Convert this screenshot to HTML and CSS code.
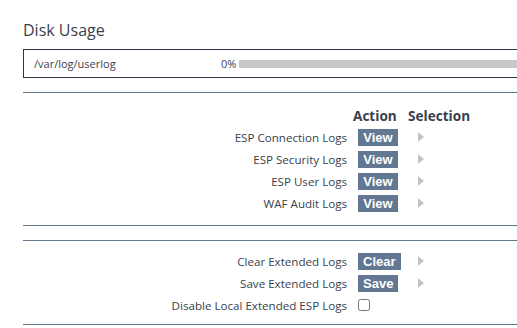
FILE: index.html
```html
<!DOCTYPE html>
<html lang="en">
<head>
    <meta charset="UTF-8">
    <title>Disk Usage</title>
    <link rel="stylesheet" href="styles.css">
</head>
<body>
    <div class="page">
        <h2 class="page-title">Disk Usage</h2>
        <div class="disk-box">
            <span class="disk-path">/var/log/userlog</span>
            <span class="disk-pct">0%</span>
            <div class="disk-bar"><div class="disk-fill" style="width: 0%"></div></div>
        </div>

        <div class="section">
            <div class="log-grid">
                <div></div>
                <div class="col-head head-action">Action</div>
                <div class="col-head head-selection">Selection</div>

                <div class="log-label">ESP Connection Logs</div>
                <div class="log-action"><button class="btn">View</button></div>
                <div class="log-sel"><span class="arrow"></span></div>

                <div class="log-label">ESP Security Logs</div>
                <div class="log-action"><button class="btn">View</button></div>
                <div class="log-sel"><span class="arrow"></span></div>

                <div class="log-label">ESP User Logs</div>
                <div class="log-action"><button class="btn">View</button></div>
                <div class="log-sel"><span class="arrow"></span></div>

                <div class="log-label">WAF Audit Logs</div>
                <div class="log-action"><button class="btn">View</button></div>
                <div class="log-sel"><span class="arrow"></span></div>
            </div>
        </div>

        <div class="section section-ext">
            <div class="log-grid">
                <div class="log-label">Clear Extended Logs</div>
                <div class="log-action"><button class="btn">Clear</button></div>
                <div class="log-sel"><span class="arrow"></span></div>

                <div class="log-label">Save Extended Logs</div>
                <div class="log-action"><button class="btn">Save</button></div>
                <div class="log-sel"><span class="arrow"></span></div>

                <div class="log-label">Disable Local Extended ESP Logs</div>
                <div class="log-action"><input type="checkbox" class="check"></div>
                <div class="log-sel"></div>
            </div>
        </div>
    </div>
</body>
</html>
```

FILE: styles.css
```css
:root {
    --text: #3a3f4c;
    --rule: #62768c;
    --box-border: #2e3846;
    --btn-bg: #627791;
    --arrow: #c3c3c3;
}

* {
    margin: 0;
    padding: 0;
    box-sizing: border-box;
}

body {
    font-family: "Open Sans", "Noto Sans", sans-serif;
    font-size: 11.6px;
    color: var(--text);
    background: #fff;
}

.page {
    margin-left: 23px;
}

.page-title {
    font-size: 16px;
    font-weight: 400;
    line-height: 20px;
    padding-top: 20px;
    margin-bottom: 9px;
}

/* box runs off the right edge, so no right border */
.disk-box {
    display: flex;
    align-items: center;
    height: 29px;
    border: 1px solid var(--box-border);
    border-right: none;
    padding-left: 10px;
}

.disk-path {
    width: 187px;
    font-size: 11px;
}

.disk-pct {
    width: 18px;
    font-size: 11px;
}

.disk-bar {
    flex: 1;
    height: 8px;
    background: #c8c8c8;
}

.disk-fill {
    height: 100%;
    background: var(--btn-bg);
}

.section {
    margin-top: 14px;
    border-top: 1px solid var(--rule);
    border-bottom: 1px solid var(--rule);
    padding: 11px 0 11px;
}

.section-ext {
    padding: 9px 0 8px;
}

.log-grid {
    display: grid;
    grid-template-columns: 324px 61px 1fr;
    grid-auto-rows: 22px;
    align-items: center;
}

.col-head {
    font-size: 13.6px;
    font-weight: 700;
    padding-top: 1px;
}

.head-action {
    padding-left: 6px;
}

.log-label {
    text-align: right;
}

.log-action {
    padding-left: 11px;
    display: flex;
    align-items: center;
}

.btn {
    font-family: "Liberation Sans", Arial, sans-serif;
    font-size: 13px;
    font-weight: 700;
    line-height: 17px;
    height: 17px;
    padding: 0 5px;
    min-width: 40px;
    color: #fff;
    background: var(--btn-bg);
    border: none;
}

.check {
    width: 12px;
    height: 12px;
    margin: 0;
}

.log-sel {
    padding-left: 10px;
    display: flex;
    align-items: center;
}

.arrow {
    width: 0;
    height: 0;
    border-top: 5px solid transparent;
    border-bottom: 5px solid transparent;
    border-left: 6px solid var(--arrow);
}
```
